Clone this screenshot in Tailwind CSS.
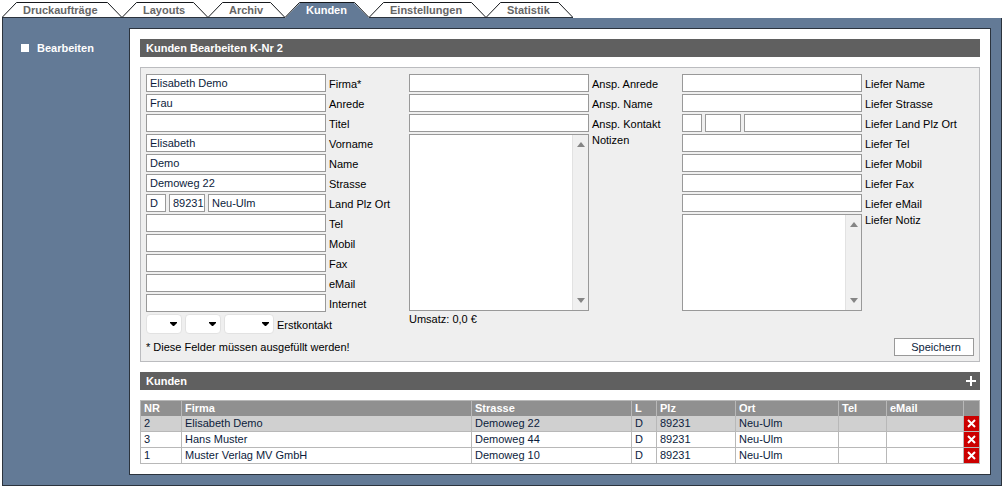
<!DOCTYPE html>
<html lang="de">
<head>
<meta charset="utf-8">
<title>Kunden Bearbeiten</title>
<script src="https://cdn.jsdelivr.net/npm/@tailwindcss/browser@4"></script>
</head>
<body class="bg-white px-0.5 font-['Liberation_Sans',Arial,sans-serif] text-[11px] leading-4 text-black">

<svg class="hidden">
  <symbol id="up" viewBox="0 0 15 16"><path d="M0 16L15 1V16Z" fill="currentColor"/><path d="M0 15.5L14.5 .5H15" fill="none" stroke="#15181c"/></symbol>
  <symbol id="down" viewBox="0 0 15 16"><path d="M0 1L15 16H0Z" fill="currentColor"/><path d="M0 .5H.5L15 15.5" fill="none" stroke="#15181c"/></symbol>
  <symbol id="arrow-up" viewBox="0 0 8 5"><path d="M0 5L4 0L8 5Z" fill="#858585"/></symbol>
  <symbol id="arrow-down" viewBox="0 0 8 5"><path d="M0 0H8L4 5Z" fill="#858585"/></symbol>
  <symbol id="caret" viewBox="0 0 8 5"><path d="M0 0H7V1L4 4H3L0 1Z" fill="#000"/></symbol>
  <symbol id="cross" viewBox="0 0 9 9"><path d="M1 1L8 8M8 1L1 8" fill="none" stroke="#fff" stroke-width="2"/></symbol>
</svg>

<nav class="flex pt-0.5 font-bold text-[#666]">
  <a href="#" class="flex h-4 border-b border-[#2b333d]"><svg class="h-4 w-[15px] text-transparent"><use href="#up"/></svg><span class="h-4 min-w-[90px] border-t border-[#15181c] px-1.5 leading-[15px]">Druckaufträge</span><svg class="h-4 w-[15px] text-transparent"><use href="#down"/></svg></a>
  <a href="#" class="flex h-4 border-b border-[#2b333d]"><svg class="h-4 w-[15px] text-transparent"><use href="#up"/></svg><span class="h-4 min-w-14 border-t border-[#15181c] px-1.5 leading-[15px]">Layouts</span><svg class="h-4 w-[15px] text-transparent"><use href="#down"/></svg></a>
  <a href="#" class="flex h-4 border-b border-[#2b333d]"><svg class="h-4 w-[15px] text-transparent"><use href="#up"/></svg><span class="h-4 min-w-[47px] border-t border-[#15181c] px-1.5 leading-[15px]">Archiv</span><svg class="h-4 w-[15px] text-transparent"><use href="#down"/></svg></a>
  <a href="#" aria-current="page" class="flex h-4 text-white"><svg class="h-4 w-[15px] text-[#637a96]"><use href="#up"/></svg><span class="h-4 min-w-[54px] border-t border-[#15181c] bg-[#637a96] px-1.5 leading-[15px]">Kunden</span><svg class="h-4 w-[15px] text-[#637a96]"><use href="#down"/></svg></a>
  <a href="#" class="flex h-4 border-b border-[#2b333d]"><svg class="h-4 w-[15px] text-transparent"><use href="#up"/></svg><span class="h-4 min-w-[87px] border-t border-[#15181c] px-1.5 leading-[15px]">Einstellungen</span><svg class="h-4 w-[15px] text-transparent"><use href="#down"/></svg></a>
  <a href="#" class="flex h-4 border-b border-[#2b333d]"><svg class="h-4 w-[15px] text-transparent"><use href="#up"/></svg><span class="h-4 min-w-[57px] border-t border-[#15181c] px-1.5 leading-[15px]">Statistik</span><svg class="h-4 w-[15px] text-transparent"><use href="#down"/></svg></a>
</nav>

<div class="flex border-x border-b border-[#2b333d] bg-[#637a96] py-2.5 pr-2.5">
  <aside class="w-[126px] shrink-0 pt-3 pl-[18px]">
    <a href="#" class="flex items-center gap-2 font-bold text-white"><span class="size-2 bg-white"></span>Bearbeiten</a>
  </aside>

  <main class="min-w-0 flex-1 border border-[#2b333d] bg-white p-2.5">
    <h1 class="h-[18px] bg-[#606060] px-1.5 font-bold leading-[18px] text-white">Kunden Bearbeiten K-Nr 2</h1>

    <form class="mt-2.5 border border-[#bbbcbf] bg-[#efefef] px-[5px] pt-1.5 pb-[5px]">
      <div class="grid grid-cols-[263fr_273fr_292fr]">
        <div>
          <div class="flex h-5 gap-[3px]"><input id="firma" value="Elisabeth Demo" class="h-[18px] w-[180px] border border-[#999] bg-white px-[3px] text-[#0c1c3c]"><label for="firma" class="leading-5">Firma*</label></div>
          <div class="flex h-5 gap-[3px]"><input id="anrede" value="Frau" class="h-[18px] w-[180px] border border-[#999] bg-white px-[3px] text-[#0c1c3c]"><label for="anrede" class="leading-5">Anrede</label></div>
          <div class="flex h-5 gap-[3px]"><input id="titel" class="h-[18px] w-[180px] border border-[#999] bg-white px-[3px] text-[#0c1c3c]"><label for="titel" class="leading-5">Titel</label></div>
          <div class="flex h-5 gap-[3px]"><input id="vorname" value="Elisabeth" class="h-[18px] w-[180px] border border-[#999] bg-white px-[3px] text-[#0c1c3c]"><label for="vorname" class="leading-5">Vorname</label></div>
          <div class="flex h-5 gap-[3px]"><input id="name" value="Demo" class="h-[18px] w-[180px] border border-[#999] bg-white px-[3px] text-[#0c1c3c]"><label for="name" class="leading-5">Name</label></div>
          <div class="flex h-5 gap-[3px]"><input id="strasse" value="Demoweg 22" class="h-[18px] w-[180px] border border-[#999] bg-white px-[3px] text-[#0c1c3c]"><label for="strasse" class="leading-5">Strasse</label></div>
          <div class="flex h-5 gap-[3px]"><input id="land" value="D" class="h-[18px] w-5 border border-[#999] bg-white px-[3px] text-[#0c1c3c]"><input aria-label="Plz" value="89231" class="h-[18px] w-9 border border-[#999] bg-white pl-[3px] text-[#0c1c3c]"><input aria-label="Ort" value="Neu-Ulm" class="h-[18px] w-[118px] border border-[#999] bg-white px-[3px] text-[#0c1c3c]"><label for="land" class="leading-5">Land Plz Ort</label></div>
          <div class="flex h-5 gap-[3px]"><input id="tel" class="h-[18px] w-[180px] border border-[#999] bg-white px-[3px]"><label for="tel" class="leading-5">Tel</label></div>
          <div class="flex h-5 gap-[3px]"><input id="mobil" class="h-[18px] w-[180px] border border-[#999] bg-white px-[3px]"><label for="mobil" class="leading-5">Mobil</label></div>
          <div class="flex h-5 gap-[3px]"><input id="fax" class="h-[18px] w-[180px] border border-[#999] bg-white px-[3px]"><label for="fax" class="leading-5">Fax</label></div>
          <div class="flex h-5 gap-[3px]"><input id="email" class="h-[18px] w-[180px] border border-[#999] bg-white px-[3px]"><label for="email" class="leading-5">eMail</label></div>
          <div class="flex h-5 gap-[3px]"><input id="internet" class="h-[18px] w-[180px] border border-[#999] bg-white px-[3px]"><label for="internet" class="leading-5">Internet</label></div>
          <div class="flex h-5 gap-[3px]">
            <div class="relative"><select id="tag" class="h-5 w-9 appearance-none rounded-sm border border-[#e2e2e2] bg-white"><option></option></select><svg class="pointer-events-none absolute top-2 right-1 h-[5px] w-2"><use href="#caret"/></svg></div>
            <div class="relative"><select aria-label="Monat" class="h-5 w-9 appearance-none rounded-sm border border-[#e2e2e2] bg-white"><option></option></select><svg class="pointer-events-none absolute top-2 right-1 h-[5px] w-2"><use href="#caret"/></svg></div>
            <div class="relative"><select aria-label="Jahr" class="h-5 w-[50px] appearance-none rounded-sm border border-[#e2e2e2] bg-white"><option></option></select><svg class="pointer-events-none absolute top-2 right-1 h-[5px] w-2"><use href="#caret"/></svg></div>
            <label for="tag" class="leading-[22px]">Erstkontakt</label>
          </div>
        </div>

        <div>
          <div class="flex h-5 gap-[3px]"><input id="a-anrede" class="h-[18px] w-[180px] border border-[#999] bg-white px-[3px]"><label for="a-anrede" class="leading-5">Ansp. Anrede</label></div>
          <div class="flex h-5 gap-[3px]"><input id="a-name" class="h-[18px] w-[180px] border border-[#999] bg-white px-[3px]"><label for="a-name" class="leading-5">Ansp. Name</label></div>
          <div class="flex h-5 gap-[3px]"><input id="a-kontakt" class="h-[18px] w-[180px] border border-[#999] bg-white px-[3px]"><label for="a-kontakt" class="leading-5">Ansp. Kontakt</label></div>
          <div class="flex gap-[3px]">
            <div class="flex h-[177px] w-[180px] border border-[#999] bg-white">
              <textarea id="notizen" class="min-w-0 flex-1 resize-none px-[3px]"></textarea>
              <div class="flex w-4 flex-col items-center justify-between border-l border-[#e2e2e2] bg-[#f0f0f0] py-[7px]"><svg class="h-[5px] w-2"><use href="#arrow-up"/></svg><svg class="h-[5px] w-2"><use href="#arrow-down"/></svg></div>
            </div>
            <label for="notizen" class="leading-3">Notizen</label>
          </div>
          <p>Umsatz: 0,0 €</p>
        </div>

        <div>
          <div class="flex h-5 gap-[3px]"><input id="l-name" class="h-[18px] w-[180px] border border-[#999] bg-white px-[3px]"><label for="l-name" class="leading-5">Liefer Name</label></div>
          <div class="flex h-5 gap-[3px]"><input id="l-strasse" class="h-[18px] w-[180px] border border-[#999] bg-white px-[3px]"><label for="l-strasse" class="leading-5">Liefer Strasse</label></div>
          <div class="flex h-5 gap-[3px]"><input id="l-land" class="h-[18px] w-5 border border-[#999] bg-white px-[3px]"><input aria-label="Liefer Plz" class="h-[18px] w-9 border border-[#999] bg-white px-[3px]"><input aria-label="Liefer Ort" class="h-[18px] w-[118px] border border-[#999] bg-white px-[3px]"><label for="l-land" class="leading-5">Liefer Land Plz Ort</label></div>
          <div class="flex h-5 gap-[3px]"><input id="l-tel" class="h-[18px] w-[180px] border border-[#999] bg-white px-[3px]"><label for="l-tel" class="leading-5">Liefer Tel</label></div>
          <div class="flex h-5 gap-[3px]"><input id="l-mobil" class="h-[18px] w-[180px] border border-[#999] bg-white px-[3px]"><label for="l-mobil" class="leading-5">Liefer Mobil</label></div>
          <div class="flex h-5 gap-[3px]"><input id="l-fax" class="h-[18px] w-[180px] border border-[#999] bg-white px-[3px]"><label for="l-fax" class="leading-5">Liefer Fax</label></div>
          <div class="flex h-5 gap-[3px]"><input id="l-email" class="h-[18px] w-[180px] border border-[#999] bg-white px-[3px]"><label for="l-email" class="leading-5">Liefer eMail</label></div>
          <div class="flex gap-[3px]">
            <div class="flex h-[97px] w-[180px] border border-[#999] bg-white">
              <textarea id="l-notiz" class="min-w-0 flex-1 resize-none px-[3px]"></textarea>
              <div class="flex w-4 flex-col items-center justify-between border-l border-[#e2e2e2] bg-[#f0f0f0] py-[7px]"><svg class="h-[5px] w-2"><use href="#arrow-up"/></svg><svg class="h-[5px] w-2"><use href="#arrow-down"/></svg></div>
            </div>
            <label for="l-notiz" class="leading-3">Liefer Notiz</label>
          </div>
        </div>
      </div>
      <div class="mt-1 flex items-center justify-between">
        <p>* Diese Felder müssen ausgefüllt werden!</p>
        <button type="button" class="h-[18px] w-20 border border-[#999] bg-white pl-1 text-[#0c1c3c]">Speichern</button>
      </div>
    </form>

    <div class="mt-2.5 flex h-[18px] items-center justify-between bg-[#606060] pr-1 pl-1.5 font-bold text-white">
      <h2>Kunden</h2>
      <button type="button" aria-label="Neuer Kunde"><svg class="block size-2.5" viewBox="0 0 10 10"><path d="M5 0V10M0 5H10" stroke="#fff" stroke-width="2"/></svg></button>
    </div>

    <table class="mt-2.5 w-full table-fixed border-collapse text-left leading-[15px] text-[#0c1c3c]">
      <colgroup><col class="w-[41px]"><col><col class="w-40"><col class="w-[25px]"><col class="w-[79px]"><col class="w-[103px]"><col class="w-12"><col class="w-[77px]"><col class="w-4"></colgroup>
      <thead>
        <tr class="bg-[#909090] text-white">
          <th class="border border-b-0 border-[#b8b8b8] px-[3px]">NR</th><th class="border border-b-0 border-[#b8b8b8] px-[3px]">Firma</th><th class="border border-b-0 border-[#b8b8b8] px-[3px]">Strasse</th><th class="border border-b-0 border-[#b8b8b8] px-[3px]">L</th><th class="border border-b-0 border-[#b8b8b8] px-[3px]">Plz</th><th class="border border-b-0 border-[#b8b8b8] px-[3px]">Ort</th><th class="border border-b-0 border-[#b8b8b8] px-[3px]">Tel</th><th class="border border-b-0 border-[#b8b8b8] px-[3px]">eMail</th><th class="border border-b-0 border-[#b8b8b8]"></th>
        </tr>
      </thead>
      <tbody>
        <tr class="bg-[#d0d0d0]">
          <td class="border border-t-0 border-[#b8b8b8] px-[3px]">2</td><td class="border border-t-0 border-[#b8b8b8] px-[3px]">Elisabeth Demo</td><td class="border border-t-0 border-[#b8b8b8] px-[3px]">Demoweg 22</td><td class="border border-t-0 border-[#b8b8b8] px-[3px]">D</td><td class="border border-t-0 border-[#b8b8b8] px-[3px]">89231</td><td class="border border-t-0 border-[#b8b8b8] px-[3px]">Neu-Ulm</td><td class="border border-t-0 border-[#b8b8b8]"></td><td class="border border-t-0 border-[#b8b8b8]"></td><td class="border border-t-0 border-[#b8b8b8] bg-[#cc0000] p-0"><button type="button" aria-label="Löschen" class="flex h-[15px] w-full items-center justify-center"><svg class="size-[9px]"><use href="#cross"/></svg></button></td>
        </tr>
        <tr>
          <td class="border border-[#b8b8b8] px-[3px]">3</td><td class="border border-[#b8b8b8] px-[3px]">Hans Muster</td><td class="border border-[#b8b8b8] px-[3px]">Demoweg 44</td><td class="border border-[#b8b8b8] px-[3px]">D</td><td class="border border-[#b8b8b8] px-[3px]">89231</td><td class="border border-[#b8b8b8] px-[3px]">Neu-Ulm</td><td class="border border-[#b8b8b8]"></td><td class="border border-[#b8b8b8]"></td><td class="border border-[#b8b8b8] bg-[#cc0000] p-0"><button type="button" aria-label="Löschen" class="flex h-[15px] w-full items-center justify-center"><svg class="size-[9px]"><use href="#cross"/></svg></button></td>
        </tr>
        <tr>
          <td class="border border-[#b8b8b8] px-[3px]">1</td><td class="border border-[#b8b8b8] px-[3px]">Muster Verlag MV GmbH</td><td class="border border-[#b8b8b8] px-[3px]">Demoweg 10</td><td class="border border-[#b8b8b8] px-[3px]">D</td><td class="border border-[#b8b8b8] px-[3px]">89231</td><td class="border border-[#b8b8b8] px-[3px]">Neu-Ulm</td><td class="border border-[#b8b8b8]"></td><td class="border border-[#b8b8b8]"></td><td class="border border-[#b8b8b8] bg-[#cc0000] p-0"><button type="button" aria-label="Löschen" class="flex h-[15px] w-full items-center justify-center"><svg class="size-[9px]"><use href="#cross"/></svg></button></td>
        </tr>
      </tbody>
    </table>
  </main>
</div>
</body>
</html>
